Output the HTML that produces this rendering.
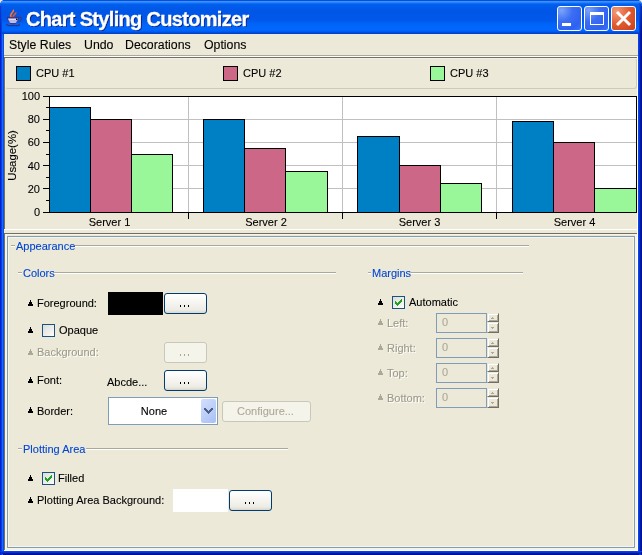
<!DOCTYPE html>
<html><head><meta charset="utf-8"><style>
*{margin:0;padding:0;box-sizing:border-box}
html,body{width:642px;height:555px;overflow:hidden;background:#ECE9D8}
body{position:relative;will-change:transform;font-family:"Liberation Sans",sans-serif;font-size:11px;color:#000}
.a{position:absolute}
.t{position:absolute;white-space:nowrap;line-height:13px;font-size:11px;-webkit-text-stroke:0.1px currentColor}
.dis{color:#9E9A88;text-shadow:1px 1px 0 #fff}
.tb{color:#0046D5}
.ln{position:absolute;height:2px;border-top:1px solid #ACA899;border-bottom:1px solid #fff}
.btn{position:absolute;border:1px solid #003C74;border-radius:3px;background:linear-gradient(#FFFFFF,#F5F4F0 50%,#ECEBE4 85%,#D8D6CC)}
.btn.d{border-color:#C9C7BA;background:#F5F4EA}
.chk{position:absolute;width:13px;height:13px;border:1px solid #1C5180;background:linear-gradient(135deg,#DCDCD7,#F2F2EF 70%,#FFFFFF)}
.sb{position:absolute;width:12px;border:1px solid;border-color:#ECE9D8 #716F64 #716F64 #ECE9D8;box-shadow:inset 1px 1px 0 #fff,inset -1px -1px 0 #ACA899;background:#ECE9D8}
.dot{position:absolute;width:1px;height:2px;background:#000}
</style></head><body>
<div class="a" style="left:0;top:0;width:642px;height:555px;background:#0842D8;border-radius:5px 5px 0 0"></div>
<div class="a" style="left:0px;top:30px;width:1px;height:525px;background:#001CD6"></div>
<div class="a" style="left:1px;top:30px;width:1px;height:525px;background:#0840E0"></div>
<div class="a" style="left:2px;top:30px;width:1px;height:525px;background:#1A6AF8"></div>
<div class="a" style="left:3px;top:30px;width:1px;height:525px;background:#0A50E0"></div>
<div class="a" style="left:638px;top:30px;width:1px;height:522px;background:#0842E8"></div>
<div class="a" style="left:639px;top:30px;width:1px;height:523px;background:#0232D2"></div>
<div class="a" style="left:640px;top:30px;width:1px;height:524px;background:#001AA6"></div>
<div class="a" style="left:641px;top:30px;width:1px;height:525px;background:#001090"></div>
<div class="a" style="left:0px;top:551px;width:642px;height:1px;background:#0842E8"></div>
<div class="a" style="left:1px;top:552px;width:640px;height:1px;background:#0232D2"></div>
<div class="a" style="left:2px;top:553px;width:638px;height:1px;background:#001AA6"></div>
<div class="a" style="left:3px;top:554px;width:636px;height:1px;background:#001090"></div>
<div class="a" style="left:4px;top:34px;width:634px;height:517px;background:#ECE9D8"></div>
<div class="a" style="left:0;top:0;width:642px;height:34px;border-radius:5px 5px 0 0;background:linear-gradient(#0A4BD8 0px,#0A4BD8 1px,#3C95FF 1px,#3590FF 2px,#1A75FA 3px,#0062F0 4px,#005CEB 6px,#0055E5 12px,#0058EA 20px,#0064F8 24px,#0068FF 30px,#0058EB 32px,#0042CC 33px,#0042CC 34px)"></div>
<div class="a" style="left:0;top:6px;width:1px;height:28px;background:linear-gradient(#0A3CD0,#0028C8)"></div>
<div class="a" style="left:1px;top:4px;width:1px;height:30px;background:linear-gradient(#1050E8,#0838D8)"></div>
<div class="a" style="left:641px;top:6px;width:1px;height:28px;background:linear-gradient(#0A30B0,#001090)"></div>
<div class="a" style="left:640px;top:4px;width:1px;height:30px;background:linear-gradient(#0840D0,#001AA6)"></div>
<div class="a" style="left:639px;top:3px;width:1px;height:31px;background:linear-gradient(#0A50E8,#0232D2)"></div>
<svg class="a" style="left:0;top:0" width="30" height="30">
<path d="M13.2 9.8 C14.2 11 12.2 12.5 11.2 14 C10.4 15.2 10.6 16.4 11.4 17.4" stroke="#F07A3A" stroke-width="1.6" fill="none"/>
<path d="M15.8 12.2 C16.4 13.3 14.6 14.3 13.8 15.4 C13.2 16.3 13.5 17 14 17.6" stroke="#E85A20" stroke-width="1.5" fill="none"/>
<path d="M11.6 15.6 L13.2 17.2" stroke="#D04010" stroke-width="1.2"/>
<path d="M7.2 17.4 L18.8 17.4 L17.6 21 Q16.5 23.8 13 23.8 Q9.5 23.8 8.4 21 Z" fill="#8A8AD8" stroke="#2C2C78" stroke-width="0.9"/>
<path d="M8.6 19.8 L17.4 19.8" stroke="#F4F4FF" stroke-width="1.2"/>
<path d="M9.6 22 L16.4 22" stroke="#E8E8FF" stroke-width="1.1"/>
<rect x="16" y="18.6" width="1.4" height="1.4" fill="#000"/>
<path d="M18.6 17.4 Q21.8 16.8 21.6 18.8 Q21.2 21 18.6 22.4" stroke="#3A3A80" stroke-width="1.1" fill="none"/>
<path d="M6.4 24 Q7.2 25.6 9 25.6 L17.6 25.6 Q19.2 25.4 19.8 24.2" stroke="#34347A" stroke-width="1.2" fill="none"/>
</svg>
<div class="t" style="left:26px;top:10px;font-size:20px;line-height:19px;letter-spacing:-0.68px;font-weight:bold;color:#fff;-webkit-text-stroke:0.3px #fff;text-shadow:1px 1px 0 #0A1F80">Chart Styling Customizer</div>
<div class="a" style="left:557px;top:6px;width:25px;height:25px;border:1px solid #fff;border-radius:3px;background:radial-gradient(circle at 15% 15%,#7CA4FA,#3C6EF4 40%,#2E61F0 75%,#3A74F8)"></div>
<div class="a" style="left:562px;top:23px;width:9px;height:3px;background:#fff"></div>
<div class="a" style="left:584px;top:6px;width:25px;height:25px;border:1px solid #fff;border-radius:3px;background:radial-gradient(circle at 15% 15%,#7CA4FA,#3C6EF4 40%,#2E61F0 75%,#3A74F8)"></div>
<div class="a" style="left:590px;top:12px;width:14px;height:13px;border:1px solid #fff;border-top-width:3px"></div>
<div class="a" style="left:611px;top:6px;width:25px;height:25px;border:1px solid #fff;border-radius:3px;background:radial-gradient(circle at 20% 20%,#F29A7A,#E05A30 50%,#C8401A)"></div>
<svg class="a" style="left:611px;top:6px" width="25" height="25"><path d="M6 6 L19 19 M19 6 L6 19" stroke="#fff" stroke-width="2.9"/></svg>
<div class="t" style="left:9px;top:39px;font-size:12.3px">Style Rules</div>
<div class="t" style="left:84px;top:39px;font-size:12.3px">Undo</div>
<div class="t" style="left:125px;top:39px;font-size:12.3px">Decorations</div>
<div class="t" style="left:204px;top:39px;font-size:12.3px">Options</div>
<div class="a" style="left:4px;top:55px;width:634px;height:1px;background:#ACA899"></div>
<div class="a" style="left:4px;top:56px;width:634px;height:1px;background:#fff"></div>
<div class="a" style="left:4px;top:57px;width:634px;height:1px;background:#716F64"></div>
<div class="a" style="left:4px;top:57px;width:1px;height:172px;background:#716F64"></div>
<div class="a" style="left:637px;top:57px;width:1px;height:173px;background:#fff"></div>
<div class="a" style="left:4px;top:229px;width:634px;height:1px;background:#fff"></div>
<div class="a" style="left:5px;top:58px;width:632px;height:31px;border:1px solid;border-color:#F2F0E6 #CFCBBB #CFCBBB #F2F0E6;border-radius:3px"></div>
<div class="a" style="left:16px;top:66px;width:15px;height:15px;border:1px solid #000;background:#0080C4"></div>
<div class="t" style="left:36px;top:67px;">CPU #1</div>
<div class="a" style="left:223px;top:66px;width:15px;height:15px;border:1px solid #000;background:#CC6787"></div>
<div class="t" style="left:243px;top:67px;">CPU #2</div>
<div class="a" style="left:430px;top:66px;width:15px;height:15px;border:1px solid #000;background:#99F799"></div>
<div class="t" style="left:450px;top:67px;">CPU #3</div>
<svg class="a" style="left:0;top:0" width="642" height="230" shape-rendering="crispEdges">
<rect x="49" y="96" width="587" height="116" fill="#fff"/>
<rect x="49" y="188" width="587" height="1" fill="#C0C0C0"/>
<rect x="49" y="165" width="587" height="1" fill="#C0C0C0"/>
<rect x="49" y="142" width="587" height="1" fill="#C0C0C0"/>
<rect x="49" y="119" width="587" height="1" fill="#C0C0C0"/>
<rect x="188" y="96" width="1" height="116" fill="#C0C0C0"/>
<rect x="342" y="96" width="1" height="116" fill="#C0C0C0"/>
<rect x="496" y="96" width="1" height="116" fill="#C0C0C0"/>
<rect x="49" y="107" width="42" height="106" fill="#000"/>
<rect x="50" y="108" width="40" height="104" fill="#0080C4"/>
<rect x="90" y="119" width="42" height="94" fill="#000"/>
<rect x="91" y="120" width="40" height="92" fill="#CC6787"/>
<rect x="131" y="154" width="42" height="59" fill="#000"/>
<rect x="132" y="155" width="40" height="57" fill="#99F799"/>
<rect x="203" y="119" width="42" height="94" fill="#000"/>
<rect x="204" y="120" width="40" height="92" fill="#0080C4"/>
<rect x="244" y="148" width="42" height="65" fill="#000"/>
<rect x="245" y="149" width="40" height="63" fill="#CC6787"/>
<rect x="285" y="171" width="43" height="42" fill="#000"/>
<rect x="286" y="172" width="41" height="40" fill="#99F799"/>
<rect x="357" y="136" width="43" height="77" fill="#000"/>
<rect x="358" y="137" width="41" height="75" fill="#0080C4"/>
<rect x="399" y="165" width="42" height="48" fill="#000"/>
<rect x="400" y="166" width="40" height="46" fill="#CC6787"/>
<rect x="440" y="183" width="42" height="30" fill="#000"/>
<rect x="441" y="184" width="40" height="28" fill="#99F799"/>
<rect x="512" y="121" width="42" height="92" fill="#000"/>
<rect x="513" y="122" width="40" height="90" fill="#0080C4"/>
<rect x="553" y="142" width="42" height="71" fill="#000"/>
<rect x="554" y="143" width="40" height="69" fill="#CC6787"/>
<rect x="594" y="188" width="43" height="25" fill="#000"/>
<rect x="595" y="189" width="41" height="23" fill="#99F799"/>
<rect x="49" y="96" width="588" height="1" fill="#000"/>
<rect x="636" y="96" width="1" height="117" fill="#000"/>
<rect x="49" y="96" width="1" height="117" fill="#000"/>
<rect x="49" y="212" width="588" height="1" fill="#000"/>
<rect x="43" y="212" width="6" height="1" fill="#000"/>
<rect x="46" y="200" width="3" height="1" fill="#000"/>
<rect x="43" y="188" width="6" height="1" fill="#000"/>
<rect x="46" y="177" width="3" height="1" fill="#000"/>
<rect x="43" y="165" width="6" height="1" fill="#000"/>
<rect x="46" y="154" width="3" height="1" fill="#000"/>
<rect x="43" y="142" width="6" height="1" fill="#000"/>
<rect x="46" y="130" width="3" height="1" fill="#000"/>
<rect x="43" y="119" width="6" height="1" fill="#000"/>
<rect x="46" y="107" width="3" height="1" fill="#000"/>
<rect x="43" y="96" width="6" height="1" fill="#000"/>
<rect x="188" y="213" width="1" height="6" fill="#000"/>
<rect x="342" y="213" width="1" height="6" fill="#000"/>
<rect x="496" y="213" width="1" height="6" fill="#000"/>
</svg>
<div class="t" style="left:0;width:40px;text-align:right;top:206px">0</div>
<div class="t" style="left:0;width:40px;text-align:right;top:183px">20</div>
<div class="t" style="left:0;width:40px;text-align:right;top:160px">40</div>
<div class="t" style="left:0;width:40px;text-align:right;top:136px">60</div>
<div class="t" style="left:0;width:40px;text-align:right;top:113px">80</div>
<div class="t" style="left:0;width:40px;text-align:right;top:90px">100</div>
<div class="t" style="left:69.5px;width:80px;text-align:center;top:216px">Server 1</div>
<div class="t" style="left:226.0px;width:80px;text-align:center;top:216px">Server 2</div>
<div class="t" style="left:379.5px;width:80px;text-align:center;top:216px">Server 3</div>
<div class="t" style="left:534.5px;width:80px;text-align:center;top:216px">Server 4</div>
<div class="t" style="left:-18px;top:148.5px;width:60px;text-align:center;font-size:11.4px;transform:rotate(-90deg)">Usage(%)</div>
<div class="a" style="left:4px;top:233px;width:634px;height:1px;background:#716F64"></div>
<div class="a" style="left:4px;top:234px;width:633px;height:1px;background:#F5F3EA"></div>
<div class="a" style="left:4px;top:233px;width:1px;height:318px;background:#716F64"></div>
<div class="a" style="left:5px;top:234px;width:1px;height:316px;background:#F5F3EA"></div>
<div class="a" style="left:637px;top:230px;width:1px;height:321px;background:#fff"></div>
<div class="a" style="left:4px;top:550px;width:634px;height:1px;background:#fff"></div>
<div class="a" style="left:6px;top:235px;width:1px;height:314px;background:#F8F4E6"></div>
<div class="a" style="left:635px;top:235px;width:2px;height:314px;background:#F8F4E6"></div>
<div class="a" style="left:6px;top:548px;width:631px;height:2px;background:#F6F2E4"></div>
<div class="a" style="left:7px;top:236px;width:628px;height:312px;border:1px solid #7F9DB9;box-shadow:inset 1px 1px 0 #F8F4E6,inset -1px -1px 0 #F8F4E6"></div>
<div class="ln" style="left:11px;top:245px;width:4px"></div>
<div class="t tb" style="left:16px;top:240px;">Appearance</div>
<div class="ln" style="left:75px;top:245px;width:454px"></div>
<div class="ln" style="left:18px;top:272px;width:4px"></div>
<div class="t tb" style="left:23px;top:267px;">Colors</div>
<div class="ln" style="left:54px;top:272px;width:282px"></div>
<div class="ln" style="left:368px;top:272px;width:3px"></div>
<div class="t tb" style="left:372px;top:267px;">Margins</div>
<div class="ln" style="left:411px;top:272px;width:112px"></div>
<div class="ln" style="left:18px;top:448px;width:4px"></div>
<div class="t tb" style="left:23px;top:443px;">Plotting Area</div>
<div class="ln" style="left:86px;top:448px;width:202px"></div>
<svg class="a" style="left:28px;top:300px" width="5" height="6" shape-rendering="crispEdges"><path d="M2 0h1v2h1v2h1v2h-5v-2h1v-2h1z" fill="#000"/></svg>
<div class="t" style="left:37px;top:297px;">Foreground:</div>
<div class="a" style="left:108px;top:292px;width:55px;height:23px;background:#000"></div>
<div class="btn" style="left:164px;top:293px;width:43px;height:21px"></div><div class="dot" style="left:180px;top:305px;background:#000"></div><div class="dot" style="left:184px;top:305px;background:#000"></div><div class="dot" style="left:188px;top:305px;background:#000"></div>
<svg class="a" style="left:28px;top:327px" width="5" height="6" shape-rendering="crispEdges"><path d="M2 0h1v2h1v2h1v2h-5v-2h1v-2h1z" fill="#000"/></svg>
<div class="chk" style="left:42px;top:324px"></div>
<div class="t" style="left:59px;top:324px;">Opaque</div>
<svg class="a" style="left:28px;top:349px" width="5" height="6" shape-rendering="crispEdges"><path d="M2 0h1v2h1v2h1v2h-5v-2h1v-2h1z" fill="#ACA899"/></svg>
<div class="t dis" style="left:37px;top:346px;">Background:</div>
<div class="btn d" style="left:164px;top:342px;width:43px;height:21px"></div><div class="dot" style="left:180px;top:354px;background:#ACA899"></div><div class="dot" style="left:184px;top:354px;background:#ACA899"></div><div class="dot" style="left:188px;top:354px;background:#ACA899"></div>
<svg class="a" style="left:28px;top:377px" width="5" height="6" shape-rendering="crispEdges"><path d="M2 0h1v2h1v2h1v2h-5v-2h1v-2h1z" fill="#000"/></svg>
<div class="t" style="left:37px;top:374px;">Font:</div>
<div class="t" style="left:107px;top:376px;">Abcde...</div>
<div class="btn" style="left:164px;top:370px;width:43px;height:21px"></div><div class="dot" style="left:180px;top:382px;background:#000"></div><div class="dot" style="left:184px;top:382px;background:#000"></div><div class="dot" style="left:188px;top:382px;background:#000"></div>
<svg class="a" style="left:28px;top:407px" width="5" height="6" shape-rendering="crispEdges"><path d="M2 0h1v2h1v2h1v2h-5v-2h1v-2h1z" fill="#000"/></svg>
<div class="t" style="left:37px;top:405px;">Border:</div>
<div class="a" style="left:108px;top:397px;width:110px;height:28px;border:1px solid #7F9DB9;background:#fff"></div>
<div class="t" style="left:108px;top:405px;width:92px;text-align:center">None</div>
<div class="a" style="left:201px;top:399px;width:15px;height:24px;border-radius:2px;background:linear-gradient(135deg,#D3DEFC,#B9CCF8 60%,#A9C0F5)"></div>
<svg class="a" style="left:201px;top:399px" width="15" height="24" shape-rendering="crispEdges"><path d="M3 9h2v1h1v1h1v1h1v-1h1v-1h1v-1h2v2h-1v1h-1v1h-1v1h-1v1h-1v-1h-1v-1h-1v-1h-1v-1h-1z" fill="#4D6185"/></svg>
<div class="btn d" style="left:222px;top:401px;width:89px;height:21px"></div>
<div class="t" style="left:221px;top:405px;width:89px;text-align:center;color:#ACA899">Configure...</div>
<svg class="a" style="left:28px;top:475px" width="5" height="6" shape-rendering="crispEdges"><path d="M2 0h1v2h1v2h1v2h-5v-2h1v-2h1z" fill="#000"/></svg>
<div class="chk" style="left:42px;top:472px"></div><svg class="a" style="left:45px;top:475px" width="7" height="7" shape-rendering="crispEdges"><g fill="#21A121"><rect x="6" y="0" width="1" height="1"/><rect x="5" y="1" width="1" height="1"/><rect x="6" y="1" width="1" height="1"/><rect x="0" y="2" width="1" height="1"/><rect x="4" y="2" width="1" height="1"/><rect x="5" y="2" width="1" height="1"/><rect x="6" y="2" width="1" height="1"/><rect x="0" y="3" width="1" height="1"/><rect x="1" y="3" width="1" height="1"/><rect x="3" y="3" width="1" height="1"/><rect x="4" y="3" width="1" height="1"/><rect x="5" y="3" width="1" height="1"/><rect x="0" y="4" width="1" height="1"/><rect x="1" y="4" width="1" height="1"/><rect x="2" y="4" width="1" height="1"/><rect x="3" y="4" width="1" height="1"/><rect x="4" y="4" width="1" height="1"/><rect x="1" y="5" width="1" height="1"/><rect x="2" y="5" width="1" height="1"/><rect x="3" y="5" width="1" height="1"/><rect x="2" y="6" width="1" height="1"/></g></svg>
<div class="t" style="left:58px;top:472px;">Filled</div>
<svg class="a" style="left:28px;top:497px" width="5" height="6" shape-rendering="crispEdges"><path d="M2 0h1v2h1v2h1v2h-5v-2h1v-2h1z" fill="#000"/></svg>
<div class="t" style="left:37px;top:494px;">Plotting Area Background:</div>
<div class="a" style="left:173px;top:489px;width:55px;height:23px;background:#fff"></div>
<div class="btn" style="left:229px;top:490px;width:43px;height:21px"></div><div class="dot" style="left:245px;top:502px;background:#000"></div><div class="dot" style="left:249px;top:502px;background:#000"></div><div class="dot" style="left:253px;top:502px;background:#000"></div>
<svg class="a" style="left:378px;top:299px" width="5" height="6" shape-rendering="crispEdges"><path d="M2 0h1v2h1v2h1v2h-5v-2h1v-2h1z" fill="#000"/></svg>
<div class="chk" style="left:392px;top:296px"></div><svg class="a" style="left:395px;top:299px" width="7" height="7" shape-rendering="crispEdges"><g fill="#21A121"><rect x="6" y="0" width="1" height="1"/><rect x="5" y="1" width="1" height="1"/><rect x="6" y="1" width="1" height="1"/><rect x="0" y="2" width="1" height="1"/><rect x="4" y="2" width="1" height="1"/><rect x="5" y="2" width="1" height="1"/><rect x="6" y="2" width="1" height="1"/><rect x="0" y="3" width="1" height="1"/><rect x="1" y="3" width="1" height="1"/><rect x="3" y="3" width="1" height="1"/><rect x="4" y="3" width="1" height="1"/><rect x="5" y="3" width="1" height="1"/><rect x="0" y="4" width="1" height="1"/><rect x="1" y="4" width="1" height="1"/><rect x="2" y="4" width="1" height="1"/><rect x="3" y="4" width="1" height="1"/><rect x="4" y="4" width="1" height="1"/><rect x="1" y="5" width="1" height="1"/><rect x="2" y="5" width="1" height="1"/><rect x="3" y="5" width="1" height="1"/><rect x="2" y="6" width="1" height="1"/></g></svg>
<div class="t" style="left:409px;top:296px;">Automatic</div>
<svg class="a" style="left:378px;top:319px" width="5" height="6" shape-rendering="crispEdges"><path d="M2 0h1v2h1v2h1v2h-5v-2h1v-2h1z" fill="#ACA899"/></svg>
<div class="t dis" style="left:387px;top:317px;">Left:</div>
<div class="a" style="left:436px;top:313px;width:51px;height:20px;border:1px solid #7F9DB9"></div>
<div class="sb" style="left:487px;top:313px;height:9px"></div>
<div class="sb" style="left:487px;top:322px;height:11px"></div>
<svg class="a" style="left:491px;top:317px" width="3" height="2" shape-rendering="crispEdges"><path d="M1 0h1v1h1v1h-3v-1h1z" fill="#ACA899"/></svg>
<svg class="a" style="left:491px;top:327px" width="3" height="2" shape-rendering="crispEdges"><path d="M0 0h3v1h-1v1h-1v-1h-1z" fill="#ACA899"/></svg>
<div class="t" style="left:442px;top:316px;color:#ACA899">0</div>
<svg class="a" style="left:378px;top:344px" width="5" height="6" shape-rendering="crispEdges"><path d="M2 0h1v2h1v2h1v2h-5v-2h1v-2h1z" fill="#ACA899"/></svg>
<div class="t dis" style="left:387px;top:342px;">Right:</div>
<div class="a" style="left:436px;top:338px;width:51px;height:20px;border:1px solid #7F9DB9"></div>
<div class="sb" style="left:487px;top:338px;height:9px"></div>
<div class="sb" style="left:487px;top:347px;height:11px"></div>
<svg class="a" style="left:491px;top:342px" width="3" height="2" shape-rendering="crispEdges"><path d="M1 0h1v1h1v1h-3v-1h1z" fill="#ACA899"/></svg>
<svg class="a" style="left:491px;top:352px" width="3" height="2" shape-rendering="crispEdges"><path d="M0 0h3v1h-1v1h-1v-1h-1z" fill="#ACA899"/></svg>
<div class="t" style="left:442px;top:341px;color:#ACA899">0</div>
<svg class="a" style="left:378px;top:369px" width="5" height="6" shape-rendering="crispEdges"><path d="M2 0h1v2h1v2h1v2h-5v-2h1v-2h1z" fill="#ACA899"/></svg>
<div class="t dis" style="left:387px;top:367px;">Top:</div>
<div class="a" style="left:436px;top:363px;width:51px;height:20px;border:1px solid #7F9DB9"></div>
<div class="sb" style="left:487px;top:363px;height:9px"></div>
<div class="sb" style="left:487px;top:372px;height:11px"></div>
<svg class="a" style="left:491px;top:367px" width="3" height="2" shape-rendering="crispEdges"><path d="M1 0h1v1h1v1h-3v-1h1z" fill="#ACA899"/></svg>
<svg class="a" style="left:491px;top:377px" width="3" height="2" shape-rendering="crispEdges"><path d="M0 0h3v1h-1v1h-1v-1h-1z" fill="#ACA899"/></svg>
<div class="t" style="left:442px;top:366px;color:#ACA899">0</div>
<svg class="a" style="left:378px;top:394px" width="5" height="6" shape-rendering="crispEdges"><path d="M2 0h1v2h1v2h1v2h-5v-2h1v-2h1z" fill="#ACA899"/></svg>
<div class="t dis" style="left:387px;top:392px;">Bottom:</div>
<div class="a" style="left:436px;top:388px;width:51px;height:20px;border:1px solid #7F9DB9"></div>
<div class="sb" style="left:487px;top:388px;height:9px"></div>
<div class="sb" style="left:487px;top:397px;height:11px"></div>
<svg class="a" style="left:491px;top:392px" width="3" height="2" shape-rendering="crispEdges"><path d="M1 0h1v1h1v1h-3v-1h1z" fill="#ACA899"/></svg>
<svg class="a" style="left:491px;top:402px" width="3" height="2" shape-rendering="crispEdges"><path d="M0 0h3v1h-1v1h-1v-1h-1z" fill="#ACA899"/></svg>
<div class="t" style="left:442px;top:391px;color:#ACA899">0</div>
</body></html>
